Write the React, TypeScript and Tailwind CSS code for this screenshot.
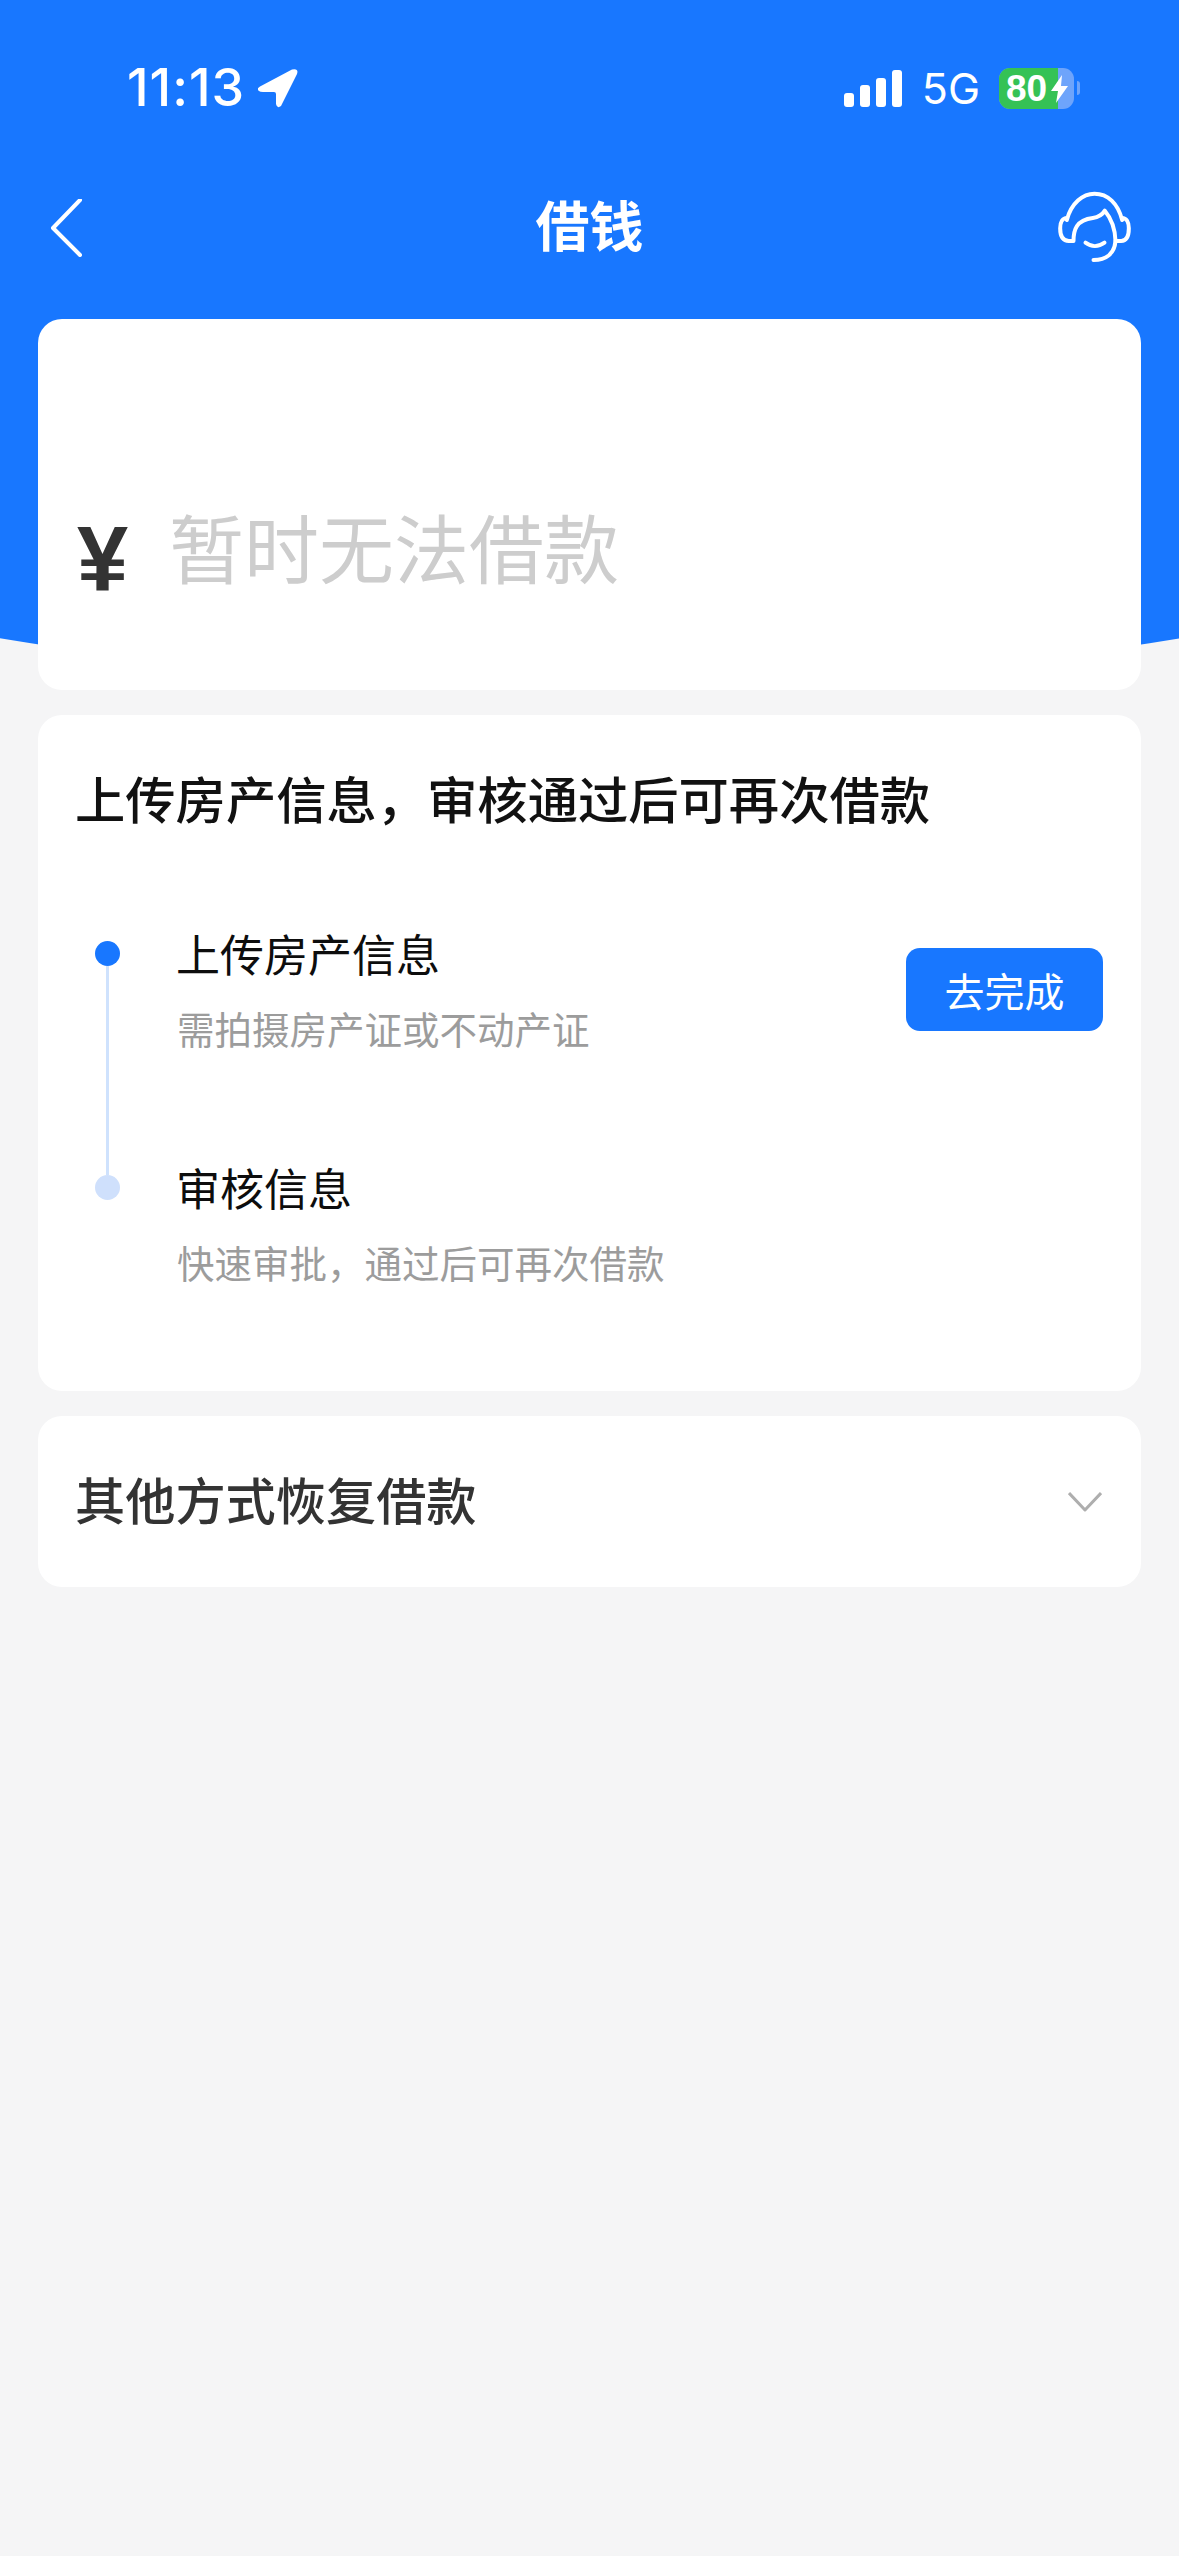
const cjk = '[font-family:"Noto_Sans_CJK_SC",sans-serif]';

function LocationArrow() {
  return (
    <svg width="40" height="40" viewBox="257 68 40 40" fill="#fff" className="ml-[13px]">
      <path d="M291 69.5 L259 86.5 Q255 89 258 91 Q259 92 262 92 L273 92 Q275 92 275 94 L275 104 Q276 109 280 106 L296 74 Q298 68 291 69.5 Z" />
    </svg>
  );
}

function SignalBars() {
  return (
    <div className="flex items-end gap-[6px] h-[37px]">
      <div className="w-[10px] h-[14px] rounded-[3px] bg-white" />
      <div className="w-[10px] h-[22px] rounded-[3px] bg-white" />
      <div className="w-[10px] h-[29px] rounded-[3px] bg-white" />
      <div className="w-[10px] h-[37px] rounded-[3px] bg-white" />
    </div>
  );
}

function Battery() {
  return (
    <div className="flex items-center">
      <div className="relative w-[75px] h-[41px] rounded-[11px] bg-[#6ea4fb] overflow-hidden">
        <div className="absolute left-0 top-0 h-full w-[59px] bg-[#35c255]" />
        <div className="absolute left-[7px] top-0 h-full flex items-center text-white font-bold text-[37px] leading-none [font-family:'Liberation_Sans',sans-serif]">
          80
        </div>
        <svg width="18" height="28" viewBox="0 0 18 28" fill="#fff" className="absolute left-[52px] top-[7px]">
          <path d="M11 0 L0 16 H7 L5 28 L17 11 H10 Z" />
        </svg>
      </div>
      <div className="ml-[3px] w-[3px] h-[14px] rounded-r-full bg-[#6ea4fb]" />
    </div>
  );
}

function BackIcon() {
  return (
    <svg width="36" height="58" viewBox="0 0 36 58" fill="none" stroke="#fff" strokeWidth="4" strokeLinecap="round" strokeLinejoin="round">
      <path d="M33 1 L6 29 L33 56" />
    </svg>
  );
}

function HeadsetIcon() {
  return (
    <svg width="77" height="75" viewBox="770 450 230 225" fill="none" stroke="#fff" strokeWidth="12" strokeLinecap="round" strokeLinejoin="round">
      <path d="M802 540 C815 490 850 461 885 461 C925 461 955 490 968 540" />
      <path d="M802 534 C790 534 782 545 782 565 C782 590 790 603 808 603 L822 603 C822 570 830 540 880 534 C895 532 908 525 916 512 C935 535 947 565 948 603 L965 603 C982 603 988 585 988 565 C988 545 980 534 968 534" />
      <path d="M948 603 C945 640 920 660 882 660" />
      <path d="M858 608 C875 621 897 621 915 608" />
    </svg>
  );
}

function ChevronDown() {
  return (
    <svg width="34" height="20" viewBox="0 0 34 20" fill="none" stroke="#aeaeae" strokeWidth="3" strokeLinejoin="round">
      <path d="M1 1 L17 18 L33 1" />
    </svg>
  );
}

function Step({
  title,
  desc,
  active,
  children,
}: {
  title: string;
  desc: string;
  active?: boolean;
  children?: React.ReactNode;
}) {
  return (
    <div className="flex h-[234px] items-start">
      <div className="w-[25px] shrink-0 pt-[7px] flex flex-col items-center">
        <div className={`w-[25px] h-[25px] rounded-full ${active ? 'bg-[#1877ff]' : 'bg-[#cfe0fc]'}`} />
        {active && <div className="w-[3px] h-[209px] shrink-0 bg-[#cfe2fd]" />}
      </div>
      <div className="ml-[56px] -mt-[3px]">
        <p className="text-[44px] leading-[44px] text-[#0d0d0d]">{title}</p>
        <p className="mt-[34px] ml-[1px] text-[37.5px] leading-[38px] text-[#9c9c9c]">{desc}</p>
      </div>
      {children}
    </div>
  );
}

export default function App() {
  return (
    <div className={`relative h-[2556px] w-[1179px] overflow-hidden bg-[#f5f5f6] ${cjk}`} lang="zh-CN">
      {/* blue backdrop with the curved bottom edge */}
      <div className="absolute left-[-3010px] top-[-6513px] w-[7200px] h-[7200px] rounded-full bg-[#1877ff]" />

      <div className="relative">
        <header className="pt-[66px] h-[110px] pl-[127px] pr-[99px] flex items-center justify-between text-white">
          <div className="flex items-center">
            <span className="text-[52px] leading-[44px] font-medium tracking-[1px] [font-family:Inter,sans-serif]">11:13</span>
            <LocationArrow />
          </div>
          <div className="flex items-center">
            <SignalBars />
            <span className="ml-[20px] text-[43px] leading-[44px] [font-family:Inter,sans-serif]">5G</span>
            <div className="ml-[19px]">
              <Battery />
            </div>
          </div>
        </header>

        <nav className="mt-[80px] h-[58px] grid grid-cols-3 items-center pl-[47px] pr-[46px]">
          <div className="justify-self-start">
            <BackIcon />
          </div>
          <h1 className="justify-self-center -mt-[7px] -ml-[1px] text-[54px] leading-[58px] font-bold text-white">借钱</h1>
          <div className="justify-self-end">
            <HeadsetIcon />
          </div>
        </nav>

        <main className="mt-[71px] mx-[38px] flex flex-col gap-[25px]">
          <section className="h-[371px] rounded-[24px] bg-white pl-[39px] pt-[187px]">
            <div className="flex items-center h-[80px]">
              <span className="w-[57px] pt-[25px] text-[92px] leading-[80px] font-bold text-[#333] [font-family:'Liberation_Sans',sans-serif]">¥</span>
              <span className="ml-[35px] text-[75px] leading-[80px] text-[#cdcdcd]">暂时无法借款</span>
            </div>
          </section>

          <section className="h-[676px] rounded-[24px] bg-white pt-[57px]">
            <h2 className="pl-[37px] text-[50.3px] leading-[50px] font-medium text-[#111]">{'上传房产信息\uFF0C审核通过后可再次借款'}</h2>
            <div className="mt-[112px] pl-[57px]">
              <Step title="上传房产信息" desc="需拍摄房产证或不动产证" active>
                <button className="ml-auto mr-[38px] mt-[14px] w-[197px] h-[83px] rounded-[14px] bg-[#1877ff] text-white text-[40px] leading-none">
                  去完成
                </button>
              </Step>
              <Step title="审核信息" desc={'快速审批\uFF0C通过后可再次借款'} />
            </div>
          </section>

          <section className="h-[171px] rounded-[24px] bg-white pl-[37px] pr-[39px] flex items-center justify-between">
            <h2 className="-mt-[8px] text-[50.2px] leading-[50px] font-medium text-[#333]">其他方式恢复借款</h2>
            <ChevronDown />
          </section>
        </main>
      </div>
    </div>
  );
}
